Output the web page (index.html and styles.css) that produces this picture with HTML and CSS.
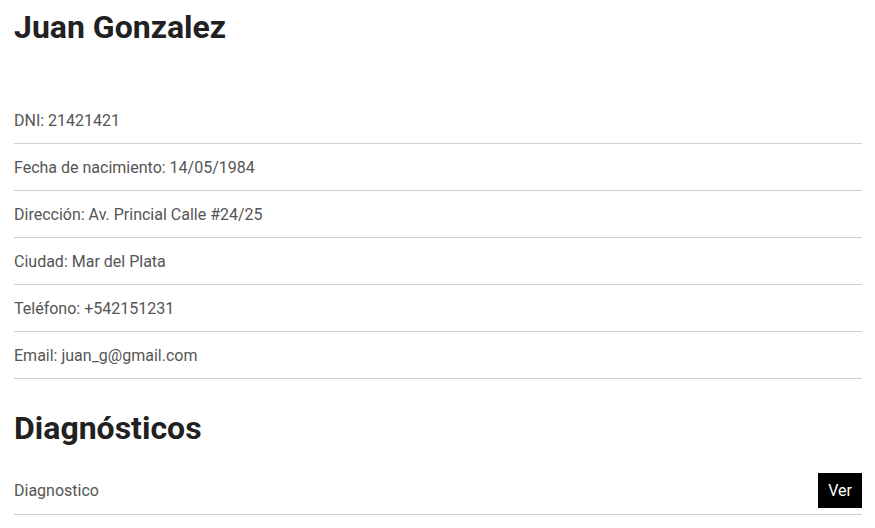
FILE: index.html
```html
<!DOCTYPE html>
<html lang="es">
<head>
<meta charset="utf-8">
<title>Juan Gonzalez</title>
<link rel="stylesheet" href="styles.css">
</head>
<body>
<main class="page">
  <h1 class="title">Juan Gonzalez</h1>
  <ul class="info">
    <li class="row">DNI: 21421421</li>
    <li class="row">Fecha de nacimiento: 14/05/1984</li>
    <li class="row">Dirección: Av. Princial Calle #24/25</li>
    <li class="row">Ciudad: Mar del Plata</li>
    <li class="row">Teléfono: +542151231</li>
    <li class="row">Email: juan_g@gmail.com</li>
  </ul>
  <h2 class="title section">Diagnósticos</h2>
  <ul class="info diag">
    <li class="row row-action"><span>Diagnostico</span><button class="btn">Ver</button></li>
  </ul>
</main>
</body>
</html>
```
FILE: styles.css
```css
* { box-sizing: border-box; }
body {
  margin: 0;
  font-family: Roboto, "Noto Sans", sans-serif;
  background: #fff;
}
.page {
  padding: 8px 13px 0 14px;
}
.title {
  margin: 0;
  font-size: 32px;
  line-height: 38px;
  font-weight: 700;
  color: #212121;
}
.info {
  list-style: none;
  margin: 51px 0 0;
  padding: 0;
}
.row {
  padding: 13px 0 11px;
  line-height: 22px;
  font-size: 16px;
  color: #555;
  border-bottom: 1px solid #cfcfcf;
}
.section {
  margin-top: 30px;
}
.diag {
  margin-top: 21px;
}
.row-action {
  display: flex;
  justify-content: space-between;
  align-items: center;
  padding: 5px 0 6px;
  height: 47px;
}
.row-action span {
  padding-top: 1px;
}
.btn {
  background: #000;
  color: #fff;
  border: 0;
  font-family: Roboto, sans-serif;
  font-size: 16px;
  height: 35px;
  width: 44px;
  padding: 0;
}
```
